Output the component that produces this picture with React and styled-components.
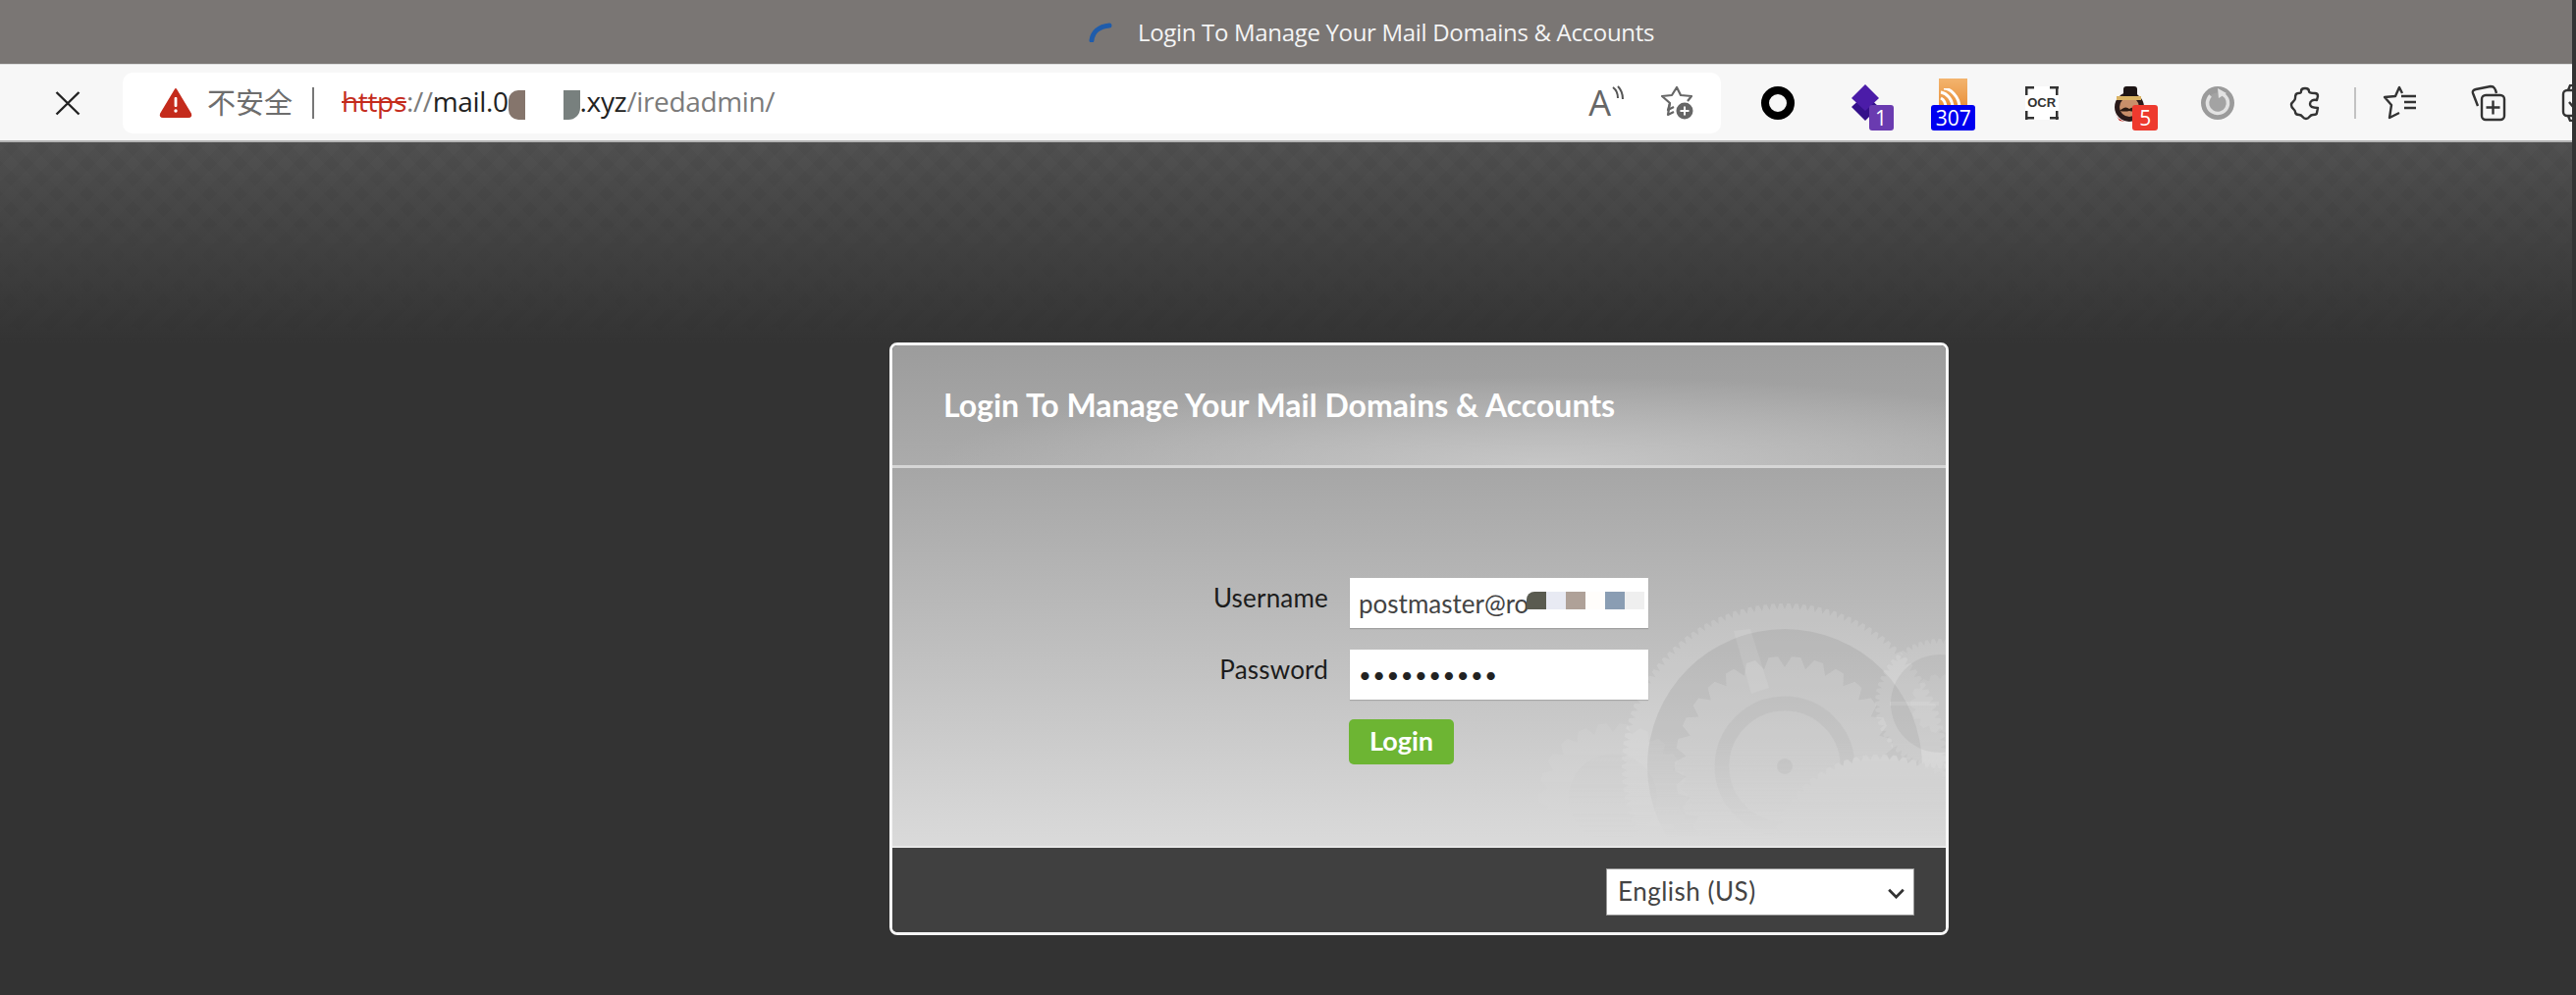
import React from 'react';
import styled, { createGlobalStyle } from 'styled-components';

const GlobalStyle = createGlobalStyle`
  html, body { margin: 0; padding: 0; background: #333; }
  body { font-family: "Open Sans", "Noto Sans CJK SC", sans-serif; }
`;

// gear outline with trapezoid teeth
const gearPath = (cx, cy, r, teeth, depth) => {
  const step = (Math.PI * 2) / teeth;
  const pts = [];
  for (let i = 0; i < teeth; i++) {
    const a = i * step;
    [[-0.5, r - depth], [-0.2, r], [0.2, r], [0.5, r - depth]].forEach(([o, rad]) => {
      const t = a + o * step;
      pts.push(`${(cx + Math.cos(t) * rad).toFixed(1)} ${(cy + Math.sin(t) * rad).toFixed(1)}`);
    });
  }
  return `M${pts.join('L')}Z`;
};

const Gears = () => (
  <GearArt viewBox="1500 476 482 386">
    <path d={gearPath(1643, 812, 76, 22, 9)} fill="#fff" opacity=".07" />
    <circle cx="1643" cy="812" r="45" fill="#000" opacity=".01" />
    <path d={gearPath(1818, 780, 166, 130, 6)} fill="#fff" opacity=".13" />
    <circle cx="1818" cy="780" r="140" fill="#000" opacity=".065" />
    <path d="M1766 642 L1783 640 L1802 700 L1784 706Z" fill="#fff" opacity=".09" />
    <path d={gearPath(1818, 780, 112, 30, 11)} fill="#fff" opacity=".14" />
    <circle cx="1818" cy="780" r="64" fill="none" stroke="#000" strokeOpacity=".035" strokeWidth="15" />
    <circle cx="1818" cy="780" r="8" fill="#000" opacity=".05" />
    <path d={gearPath(1976, 716, 66, 60, 5)} fill="#fff" opacity=".12" />
    <circle cx="1976" cy="716" r="50" fill="#000" opacity=".05" />
    <path d={gearPath(1976, 716, 30, 14, 5)} fill="#fff" opacity=".08" />
    <path d="M1925 714h50v4h-50z" fill="#fff" opacity=".1" />
    <path d={gearPath(1915, 880, 112, 70, 5)} fill="#d3d3d3" />
  </GearArt>
);

const Warning = () => (
  <svg width="34" height="31" viewBox="0 0 34 31">
    <path d="M17 2 L32 27 Q33 30 30 30 H4 Q1 30 2 27 Z" fill="#c42b1c" stroke="#c42b1c" strokeWidth="2" strokeLinejoin="round" />
    <rect x="15.6" y="10" width="2.8" height="10" rx="1" fill="#fff" />
    <circle cx="17" cy="24" r="1.7" fill="#fff" />
  </svg>
);

const App = () => (
  <Root>
    <GlobalStyle />
    <Main>
      <TitleBar>
        <svg width="24" height="20" viewBox="0 0 24 20">
          <path d="M3 18 C4 10 10 4 21 3" fill="none" stroke="#1f5cab" strokeWidth="5" strokeLinecap="round" />
        </svg>
        <TabTitle>Login To Manage Your Mail Domains &amp; Accounts</TabTitle>
      </TitleBar>

      <Toolbar>
        <CloseButton>
          <svg width="26" height="26" viewBox="0 0 26 26">
            <path d="M1.5 2 L24.5 24.5 M24.5 2 L1.5 24.5" stroke="#222" strokeWidth="2.4" />
          </svg>
        </CloseButton>
        <AddressBar>
          <Warning />
          <Insecure>不安全</Insecure>
          <Divider />
          <Url>
            <Scheme>https</Scheme>
            <UrlMuted>://</UrlMuted>
            mail.0
            <Mask>
              <MaskPiece $bg="#85756c" $w={17} $radius="10px 0 0 10px" />
              <MaskPiece $bg="#fff" $w={39} />
              <MaskPiece $bg="#78807e" $w={17} $radius="0 0 12px 0" />
            </Mask>
            .xyz
            <UrlMuted>/iredadmin/</UrlMuted>
          </Url>
          <AddressActions>
            <ReadAloud>
              <ReadLetter>A</ReadLetter>
              <svg width="14" height="22" viewBox="0 0 14 22">
                <path d="M2 2 C6 5 7 9 7 13 M7 1 C11 5 12 9 12 14" fill="none" stroke="#555" strokeWidth="2" />
              </svg>
            </ReadAloud>
            <svg width="38" height="36" viewBox="0 0 38 36">
              <path d="M15 22 L9 25 L11 18 L3 11 L13 10 L18 2 L22 10 L33 11 L29 16" fill="none" stroke="#666" strokeWidth="2.2" strokeLinejoin="round" />
              <path d="M11 18 L9 30 L15 27" fill="none" stroke="#666" strokeWidth="2.2" strokeLinejoin="round" />
              <circle cx="26" cy="26" r="8.5" fill="#666" />
              <path d="M26 21.5v9M21.5 26h9" stroke="#fff" strokeWidth="2" />
            </svg>
          </AddressActions>
        </AddressBar>

        <ToolSlots>
          <ToolSlot>
            <svg width="36" height="36" viewBox="0 0 36 36">
              <circle cx="18" cy="18" r="13" fill="none" stroke="#000" strokeWidth="8" />
            </svg>
          </ToolSlot>
          <ToolSlot>
            <svg width="34" height="40" viewBox="0 0 34 40">
              <path d="M3 24 L17 11 L31 24 L17 38Z" fill="#34118a" />
              <path d="M3 15 L17 1 L31 15 L17 28Z" fill="#4b1ca8" />
            </svg>
            <Badge $left={48} $w={25} $bg="#6a3bb0">1</Badge>
          </ToolSlot>
          <ToolSlot>
            <RssTile>
              <svg width="28" height="20" viewBox="0 0 28 20">
                <path d="M7 20 C7 14 4 11 2 10 M14 20 C14 11 8 5 2 4 M21 20 C21 8 11 0 5 0" fill="none" stroke="#fff" strokeWidth="3" />
              </svg>
            </RssTile>
            <Badge $left={22} $w={45} $bg="#0000f0">307</Badge>
          </ToolSlot>
          <ToolSlot>
            <OcrFrame>OCR</OcrFrame>
          </ToolSlot>
          <ToolSlot>
            <svg width="36" height="40" viewBox="0 0 36 40">
              <circle cx="18" cy="24" r="15" fill="#2a1a1a" />
              <circle cx="18" cy="24" r="10" fill="#c98f6a" />
              <rect x="12" y="3" width="14" height="13" rx="3" fill="#1c1414" />
              <rect x="5" y="13" width="25" height="4" fill="#d9b263" />
              <path d="M8 28 Q14 22 18 26 Q22 22 28 28 Q22 29 18 28 Q14 29 8 28Z" fill="#2b1a12" />
              <path d="M3 30 Q6 37 14 39 L8 38Z" fill="#c8281f" />
            </svg>
            <Badge $left={48} $w={26} $bg="#ee3a2e">5</Badge>
          </ToolSlot>
          <ToolSlot>
            <svg width="36" height="36" viewBox="0 0 36 36">
              <circle cx="18" cy="18" r="17" fill="#9b9b9b" />
              <circle cx="18" cy="18" r="10.5" fill="#a3a3a3" stroke="#e2e2e2" strokeWidth="3.5" strokeDasharray="52 14" transform="rotate(-60 18 18)" />
              <path d="M18 3 L27 8 L19 13Z" fill="#e2e2e2" />
            </svg>
          </ToolSlot>
          <ToolSlot>
            <svg width="34" height="36" viewBox="0 0 34 36">
              <path d="M13 6 C13 2 21 2 21 6 C21 8 24 8 27 8 C29 8 30 9 30 11 L29 15 C25 14 22 16 22 19 C22 22 25 23 30 23 L29 28 C29 30 27 30 25 30 C21 30 22 34 18 34 C14 34 15 30 11 30 C8 30 7 29 7 27 C7 24 3 24 3 20 C3 16 7 17 7 13 C7 9 8 8 10 8 C12 8 13 8 13 6Z" fill="none" stroke="#333" strokeWidth="2.4" strokeLinejoin="round" />
            </svg>
          </ToolSlot>
          <ToolDivider />
          <ToolSlot>
            <svg width="36" height="36" viewBox="0 0 36 36">
              <path d="M20 8 L17 2 L13 11 L2 12 L9 20 L7 33 L17 28" fill="none" stroke="#333" strokeWidth="2.4" strokeLinejoin="round" />
              <path d="M19 11h15M22 17h12M22 23h12" stroke="#333" strokeWidth="2.4" />
            </svg>
          </ToolSlot>
          <ToolSlot>
            <svg width="36" height="38" viewBox="0 0 36 38">
              <path d="M7 22 L2 9 Q1 6 5 5 L20 2 Q24 2 25 6 L26 9" fill="none" stroke="#333" strokeWidth="2.4" />
              <rect x="11" y="11" width="23" height="25" rx="4" fill="none" stroke="#333" strokeWidth="2.4" />
              <path d="M22.5 16.5v14M15.5 23.5h14" stroke="#333" strokeWidth="2.4" />
            </svg>
          </ToolSlot>
          <ToolSlot>
            <svg width="36" height="38" viewBox="0 0 36 38">
              <path d="M10 6 L12 1 H24 L26 6 M10 32 L12 37 H24 L26 32" fill="none" stroke="#333" strokeWidth="2.4" />
              <rect x="5" y="6" width="26" height="26" rx="4" fill="none" stroke="#333" strokeWidth="2.4" />
              <path d="M11 18 L16 24 L25 13" fill="none" stroke="#333" strokeWidth="2.4" />
            </svg>
          </ToolSlot>
        </ToolSlots>
      </Toolbar>

      <Page>
        <Panel>
          <PanelHeader>
            <Heading>Login To Manage Your Mail Domains &amp; Accounts</Heading>
          </PanelHeader>
          <PanelBody>
            <Gears />
            <LoginForm>
              <FieldLabel>Username</FieldLabel>
              <FieldBox>
                <TextField type="text" readOnly value="postmaster@ro" />
                <Redaction>
                  <RedactionPiece $bg="#5a5b50" $radius="8px 0 0 0" />
                  <RedactionPiece $bg="#e8eaf3" />
                  <RedactionPiece $bg="#afa198" />
                  <RedactionPiece $bg="#fffdfb" />
                  <RedactionPiece $bg="#8a9db3" />
                  <RedactionPiece $bg="#efefef" />
                </Redaction>
              </FieldBox>
              <FieldLabel>Password</FieldLabel>
              <FieldBox>
                <PasswordField type="password" readOnly value="1234567890" />
              </FieldBox>
              <LoginButton type="button">Login</LoginButton>
            </LoginForm>
          </PanelBody>
          <PanelFooter>
            <SelectWrap>
              <LangSelect defaultValue="en_US">
                <option value="en_US">English (US)</option>
              </LangSelect>
              <Chevron viewBox="0 0 20 12">
                <path d="M2 2 L10 10 L18 2" fill="none" stroke="#333" strokeWidth="3" />
              </Chevron>
            </SelectWrap>
          </PanelFooter>
        </Panel>
      </Page>
    </Main>
  </Root>
);

const Root = styled.div`
  width: 2624px;
  height: 1014px;
  overflow: hidden;
  background: #333;
`;

const Main = styled.div`
  width: 2620px;
  height: 1014px;
  overflow: hidden;
  display: flex;
  flex-direction: column;
`;

const TitleBar = styled.div`
  height: 65px;
  flex: none;
  background: #7a7674;
  display: flex;
  align-items: center;
  padding-left: 1109px;
  gap: 26px;
  box-sizing: border-box;
`;

const TabTitle = styled.span`
  color: #f4f4f4;
  font-size: 24px;
  letter-spacing: -0.32px;
  font-family: "Open Sans", sans-serif;
`;

const Toolbar = styled.div`
  height: 80px;
  flex: none;
  box-sizing: border-box;
  background: #f7f7f7;
  border-top: 1px solid #dcdcdc;
  border-bottom: 2px solid #b4b4b4;
  display: flex;
  align-items: center;
  padding-left: 56px;
`;

const CloseButton = styled.div`
  width: 69px;
  flex: none;
  display: flex;
`;

const AddressBar = styled.div`
  width: 1628px;
  height: 62px;
  flex: none;
  box-sizing: border-box;
  background: #fff;
  border-radius: 10px;
  display: flex;
  align-items: center;
  padding: 0 25px 0 37px;
`;

const Insecure = styled.span`
  margin: -3px 0 0 15px;
  font-size: 29px;
  color: #6d6d6d;
  font-family: "Noto Sans CJK SC", sans-serif;
  line-height: 1;
`;

const Divider = styled.span`
  width: 2px;
  height: 32px;
  background: #777;
  margin: 0 27px 0 20px;
`;

const Url = styled.div`
  display: flex;
  align-items: center;
  margin: -3px 0 0 1px;
  font-size: 28px;
  color: #222;
  font-family: "Open Sans", sans-serif;
  letter-spacing: -0.35px;
`;

const Scheme = styled.span`
  color: #c42b1c;
  text-decoration: line-through;
`;

const UrlMuted = styled.span`
  color: #7b7b7b;
`;

const Mask = styled.span`
  display: flex;
  height: 30px;
  width: 73px;
  margin-top: 7px;
`;

const MaskPiece = styled.span`
  display: block;
  width: ${(p) => p.$w}px;
  background: ${(p) => p.$bg};
  border-radius: ${(p) => p.$radius || '0'};
`;

const AddressActions = styled.div`
  margin-left: auto;
  display: flex;
  align-items: center;
  gap: 35px;
`;

const ReadAloud = styled.div`
  display: flex;
  align-items: flex-start;
`;

const ReadLetter = styled.span`
  font-size: 36px;
  line-height: 36px;
  color: #666;
  font-weight: 400;
  font-family: "Open Sans", sans-serif;
`;

const ToolSlots = styled.div`
  margin-left: 13px;
  display: flex;
  align-items: center;
  height: 100%;
`;

const ToolSlot = styled.div`
  position: relative;
  width: 89.6px;
  height: 100%;
  flex: none;
  display: flex;
  align-items: center;
  justify-content: center;
`;

const Badge = styled.span`
  position: absolute;
  left: ${(p) => p.$left}px;
  top: 41px;
  width: ${(p) => p.$w}px;
  height: 26px;
  border-radius: 3px;
  background: ${(p) => p.$bg};
  color: #fff;
  font-size: 21px;
  line-height: 26px;
  text-align: center;
  font-family: "Open Sans", sans-serif;
`;

const RssTile = styled.div`
  width: 29px;
  height: 30px;
  margin-top: -20px;
  background: linear-gradient(#f3b46e, #e9903a);
  display: flex;
  align-items: flex-end;
  overflow: hidden;
`;

const OcrFrame = styled.div`
  position: relative;
  width: 34px;
  height: 34px;
  display: flex;
  align-items: center;
  justify-content: center;
  font-size: 13px;
  font-weight: 700;
  color: #333;
  font-family: "Liberation Sans", sans-serif;
  background:
    linear-gradient(#333, #333) 0 0 / 9px 2.5px no-repeat,
    linear-gradient(#333, #333) 0 0 / 2.5px 9px no-repeat,
    linear-gradient(#333, #333) 100% 0 / 9px 2.5px no-repeat,
    linear-gradient(#333, #333) 100% 0 / 2.5px 9px no-repeat,
    linear-gradient(#333, #333) 0 100% / 9px 2.5px no-repeat,
    linear-gradient(#333, #333) 0 100% / 2.5px 9px no-repeat,
    linear-gradient(#333, #333) 100% 100% / 9px 2.5px no-repeat,
    linear-gradient(#333, #333) 100% 100% / 2.5px 9px no-repeat,
    #fff;
`;

const ToolDivider = styled.span`
  width: 2px;
  height: 32px;
  flex: none;
  margin: 0 0 0 5px;
  background: #c2c2c2;
`;

const Page = styled.main`
  flex: 1;
  position: relative;
  background: linear-gradient(#4f4f4f 0, #333 205px);
  padding: 204px 0 0 906px;

  &::before {
    content: '';
    position: absolute;
    left: 0;
    right: 0;
    top: 0;
    height: 205px;
    background:
      repeating-linear-gradient(45deg, rgba(255, 255, 255, 0.011) 0 11px, transparent 11px 22px),
      repeating-linear-gradient(-45deg, rgba(0, 0, 0, 0.022) 0 11px, transparent 11px 22px);
    -webkit-mask-image: linear-gradient(#000, transparent);
    mask-image: linear-gradient(#000, transparent);
  }
`;

const Panel = styled.section`
  position: relative;
  width: 1079px;
  height: 604px;
  box-sizing: border-box;
  border: 3px solid #f6f6f6;
  border-radius: 8px;
  overflow: hidden;
  display: flex;
  flex-direction: column;
`;

const PanelHeader = styled.header`
  height: 125px;
  flex: none;
  box-sizing: border-box;
  padding: 0 0 2px 52px;
  display: flex;
  align-items: center;
  border-bottom: 3px solid #d6d6d6;
  background:
    radial-gradient(ellipse 620px 90px at 62% 100%, #c6c6c6, rgba(198, 198, 198, 0)),
    linear-gradient(#9c9c9c, #ababab);
`;

const Heading = styled.h1`
  margin: 0;
  color: #fff;
  font-size: 32px;
  font-weight: 700;
  font-family: Lato, sans-serif;
  letter-spacing: 0;
`;

const PanelBody = styled.div`
  position: relative;
  flex: 1;
  box-sizing: border-box;
  padding-top: 112px;
  border-bottom: 2px solid #e8e8e8;
  background: linear-gradient(#a6a6a6, #dadada);
`;

const GearArt = styled.svg`
  position: absolute;
  right: 0;
  top: 0;
  width: 482px;
  height: 386px;
  -webkit-mask-image: linear-gradient(#000 72%, transparent 98%);
  mask-image: linear-gradient(#000 72%, transparent 98%);
`;

const LoginForm = styled.form`
  position: relative;
  display: grid;
  grid-template-columns: 444px 304px;
  column-gap: 22px;
  row-gap: 22px;
  font-family: Lato, sans-serif;
`;

const FieldLabel = styled.label`
  text-align: right;
  font-size: 26px;
  line-height: 40px;
  letter-spacing: 0.2px;
  color: #1c1c1c;
`;

const FieldBox = styled.div`
  position: relative;
  height: 51px;
`;

const TextField = styled.input`
  width: 100%;
  height: 100%;
  box-sizing: border-box;
  border: 0;
  outline: 0;
  background: #fff;
  box-shadow: 0 1px 1px rgba(0, 0, 0, 0.15);
  padding: 0 10px 0 9px;
  font-size: 26px;
  color: #444;
  font-family: Lato, sans-serif;
`;

const PasswordField = styled(TextField)`
  letter-spacing: 1.5px;
  color: #222;
  font-size: 22px;
`;

const Redaction = styled.div`
  position: absolute;
  left: 180px;
  top: 14px;
  height: 18px;
  width: 121px;
  display: grid;
  grid-template-columns: repeat(6, 20px);
`;

const RedactionPiece = styled.span`
  background: ${(p) => p.$bg};
  border-radius: ${(p) => p.$radius || '0'};
`;

const LoginButton = styled.button`
  grid-column: 2;
  justify-self: start;
  width: 107px;
  height: 46px;
  margin: -2px 0 0 -1px;
  padding: 0 0 3px;
  border: 0;
  border-radius: 5px;
  background: #6db533;
  color: #fff;
  font-size: 27px;
  font-weight: 700;
  font-family: Lato, sans-serif;
`;

const PanelFooter = styled.footer`
  height: 86px;
  flex: none;
  box-sizing: border-box;
  background: #404040;
  display: flex;
  justify-content: flex-end;
  padding: 21px 32px 0 0;
`;

const SelectWrap = styled.div`
  position: relative;
  width: 314px;
  height: 48px;
`;

const LangSelect = styled.select`
  width: 100%;
  height: 100%;
  appearance: none;
  border: 1px solid #999;
  border-radius: 0;
  background: #fff;
  padding: 0 0 2px 11px;
  font-size: 26px;
  letter-spacing: 0.5px;
  color: #444;
  font-family: Lato, sans-serif;
`;

const Chevron = styled.svg`
  position: absolute;
  right: 9px;
  top: 20px;
  width: 19px;
  height: 11px;
  pointer-events: none;
`;

export default App;
